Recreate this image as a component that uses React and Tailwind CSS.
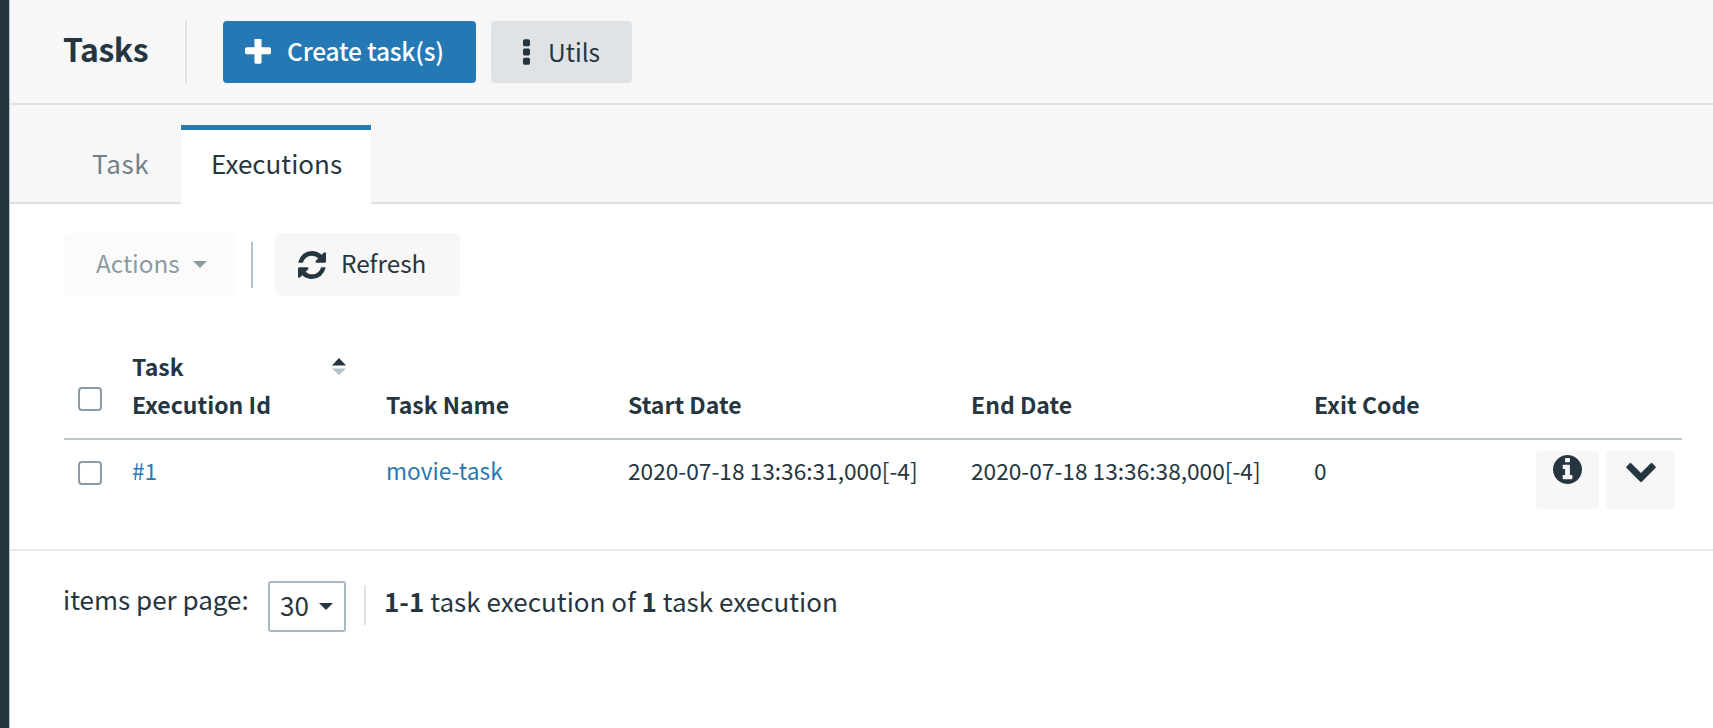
const PATHS = {
  plus: {
    box: '192 192 1408 1408',
    d: 'M1600 736v192q0 40-28 68t-68 28h-416v416q0 40-28 68t-68 28h-192q-40 0-68-28t-28-68v-416h-416q-40 0-68-28t-28-68v-192q0-40 28-68t68-28h416v-416q0-40 28-68t68-28h192q40 0 68 28t28 68v416h416q40 0 68 28t28 68z',
  },
  dots: {
    box: '704 128 384 1408',
    d: 'M1088 1248v192q0 40-28 68t-68 28h-192q-40 0-68-28t-28-68v-192q0-40 28-68t68-28h192q40 0 68 28t28 68zm0-512v192q0 40-28 68t-68 28h-192q-40 0-68-28t-28-68v-192q0-40 28-68t68-28h192q40 0 68 28t28 68zm0-512v192q0 40-28 68t-68 28h-192q-40 0-68-28t-28-68v-192q0-40 28-68t68-28h192q40 0 68 28t28 68z',
  },
  refresh: {
    box: '128 128 1536 1536',
    d: 'M1639 1056q0 5-1 7-64 268-268 434.500t-478 166.500q-146 0-282.500-55t-243.500-157l-129 129q-19 19-45 19t-45-19-19-45v-448q0-26 19-45t45-19h448q26 0 45 19t19 45-19 45l-137 137q71 66 161 102t187 36q134 0 250-65t186-179q11-17 53-117 8-23 30-23h192q13 0 22.500 9.500t9.500 22.500zm25-800v448q0 26-19 45t-45 19h-448q-26 0-45-19t-19-45 19-45l138-138q-148-137-349-137-134 0-250 65t-186 179q-11 17-53 117-8 23-30 23h-199q-13 0-22.500-9.500t-9.500-22.500v-7q65-268 270-434.500t480-166.500q146 0 284 55.500t245 156.500l130-129q19-19 45-19t45 19 19 45z',
  },
  info: {
    box: '128 128 1536 1536',
    d: 'M1152 1376v-160q0-14-9-23t-23-9h-96v-512q0-14-9-23t-23-9h-320q-14 0-23 9t-9 23v160q0 14 9 23t23 9h96v320h-96q-14 0-23 9t-9 23v160q0 14 9 23t23 9h448q14 0 23-9t9-23zm-128-896v-160q0-14-9-23t-23-9h-192q-14 0-23 9t-9 23v160q0 14 9 23t23 9h192q14 0 23-9t9-23zm640 416q0 209-103 385.500t-279.500 279.500-385.500 103-385.500-103-279.500-279.500-103-385.500 103-385.500 279.500-279.500 385.500-103 385.500 103 279.500 279.500 103 385.500z',
  },
  chevron: {
    box: '90 533 1612 1035',
    d: 'M1683 808l-742 741q-19 19-45 19t-45-19l-742-741q-19-19-19-45.500t19-45.500l166-165q19-19 45-19t45 19l531 531 531-531q19-19 45-19t45 19l166 165q19 19 19 45.500t-19 45.500z',
  },
}

function Icon({ name, className }) {
  return (
    <svg viewBox={PATHS[name].box} fill="currentColor" className={className} aria-hidden="true">
      <path d={PATHS[name].d} />
    </svg>
  )
}

function Caret({ className }) {
  return (
    <svg viewBox="0 0 14 7" fill="currentColor" className={className} aria-hidden="true">
      <path d="M0 0h14L7 7z" />
    </svg>
  )
}

function Checkbox({ className }) {
  return (
    <span
      role="checkbox"
      aria-checked="false"
      className={`block size-6 shrink-0 rounded-[4px] border-2 border-[#8b9ba5] bg-white ${className}`}
    />
  )
}

function Header() {
  return (
    <header className="flex h-[105px] items-start border-b-2 border-[#dee2e5] bg-[#f7f7f7] pt-[21px] pl-[53px]">
      <h1 className="mt-[4px] w-[122px] text-[32px] leading-[46px] font-bold tracking-[-0.5px]">Tasks</h1>
      <div className="h-[62px] w-[2px] bg-[#dfe3e6]" />
      <button className="ml-9 flex h-[62px] w-[253px] items-center rounded-[4px] bg-[#2479b4] pl-[22px] text-[24.500px] font-medium tracking-[-0.2px] text-white">
        <Icon name="plus" className="mr-4 size-[26px]" />
        <span className="pb-px">Create task(s)</span>
      </button>
      <button className="ml-[15px] flex h-[62px] w-[141px] items-center rounded-[4px] bg-[#dfe3e6] pl-8 text-[24.500px]">
        <Icon name="dots" className="mr-[18px] h-[26px] w-[7px]" />
        Utils
      </button>
    </header>
  )
}

function Tabs() {
  return (
    <nav className="flex h-[99px] items-end bg-[#f7f7f7] text-[26px] leading-9">
      <div className="h-full w-[171px] border-b-2 border-[#dee2e5] pt-[40px] pl-[82px] tracking-[0.7px] text-[#6f8089]">
        Task
      </div>
      <div className="h-[79px] w-[190px] border-t-[5px] border-[#2a78ad] bg-white pt-[15px] pl-[30px]">Executions</div>
      <div className="h-full flex-1 border-b-2 border-[#dee2e5]" />
    </nav>
  )
}

function Toolbar() {
  return (
    <div className="flex items-center pt-[29px] pl-[54px] text-[24.300px]">
      <button className="flex h-[63px] w-[172px] items-center rounded-[4px] bg-[#fbfbfb] pl-8 text-[#8a9ba4]">
        <span className="pb-[2px]">Actions</span>
        <Caret className="ml-[13px] h-[7px] w-[14px]" />
      </button>
      <div className="ml-[15px] h-[46px] w-[2px] bg-[#b4c2cb]" />
      <button className="ml-[22px] flex h-[63px] w-[185px] items-center rounded-[5px] bg-[#f7f7f7] pl-[23px]">
        <Icon name="refresh" className="mr-[15px] size-[28px]" />
        <span className="pb-[2px]">Refresh</span>
      </button>
    </div>
  )
}

const COLS = 'grid grid-cols-[68px_254px_242px_343px_343px_222px_146px]'

function Table() {
  return (
    <section className="ml-[54px] w-[1618px]">
      <div className={`${COLS} h-[144px] items-end border-b-2 border-[#bfc6ca] pb-[15px] text-[23px] leading-[38px] font-bold`}>
        <Checkbox className="mb-[12px] ml-[14px]" />
        <div className="flex justify-between pr-[40px]">
          <span>
            Task
            <br />
            Execution Id
          </span>
          <svg viewBox="0 0 14 17" className="mt-[11px] h-[17px] w-[14px]" aria-hidden="true">
            <path d="M0 7.500L7 0l7 7.500z" fill="#263640" />
            <path d="M0 10.500h14L7 17z" fill="#b5c1c8" />
          </svg>
        </div>
        <span>Task Name</span>
        <span>Start Date</span>
        <span>End Date</span>
        <span>Exit Code</span>
      </div>
      <div className={`${COLS} h-[109px] items-start pt-[11px] text-[22.700px] leading-[40px]`}>
        <Checkbox className="mt-[10px] ml-[14px]" />
        <a className="text-[#2a78b0]">#1</a>
        <a className="text-[#2a78b0]">movie-task</a>
        <span>2020-07-18 13:36:31,000[-4]</span>
        <span>2020-07-18 13:36:38,000[-4]</span>
        <span>0</span>
        <div className="flex gap-[7px]">
          <button className="flex h-[58px] w-[63px] justify-center rounded-[4px] bg-[#f7f7f7] pt-[4px]">
            <Icon name="info" className="size-[29px]" />
          </button>
          <button className="flex h-[58px] w-[69px] justify-center rounded-[4px] bg-[#f7f7f7] pt-[12px]">
            <Icon name="chevron" className="h-[19px] w-[30px]" />
          </button>
        </div>
      </div>
    </section>
  )
}

function Footer() {
  return (
    <footer className="flex items-start border-t-2 border-[#e6e8e9] pt-[30px] pl-[53px] text-[26px] leading-9">
      <span className="w-[205px]">items per page:</span>
      <button className="flex h-[51px] w-[78px] items-center rounded-[3px] border-2 border-[#a9b8c1] pl-[10px]">
        <span className="pb-[3px]">30</span>
        <Caret className="ml-[10px] h-[7px] w-[14px]" />
      </button>
      <div className="mt-[4px] ml-[18px] h-[40px] w-[2px] bg-[#dfe3e6]" />
      <p className="mt-[2px] ml-[18px] tracking-[0.03px]">
        <b>1-1</b> task execution of <b>1</b> task execution
      </p>
    </footer>
  )
}

export default function App() {
  return (
    <div className="flex h-[728px] w-[1713px] overflow-hidden bg-white font-['Noto_Sans_CJK_SC','Open_Sans',sans-serif] text-[#263640]">
      <aside className="w-[10px] shrink-0 border-r border-[#b9c0c4] bg-[#263640]" />
      <main className="min-w-0 flex-1">
        <Header />
        <Tabs />
        <Toolbar />
        <Table />
        <Footer />
      </main>
    </div>
  )
}
